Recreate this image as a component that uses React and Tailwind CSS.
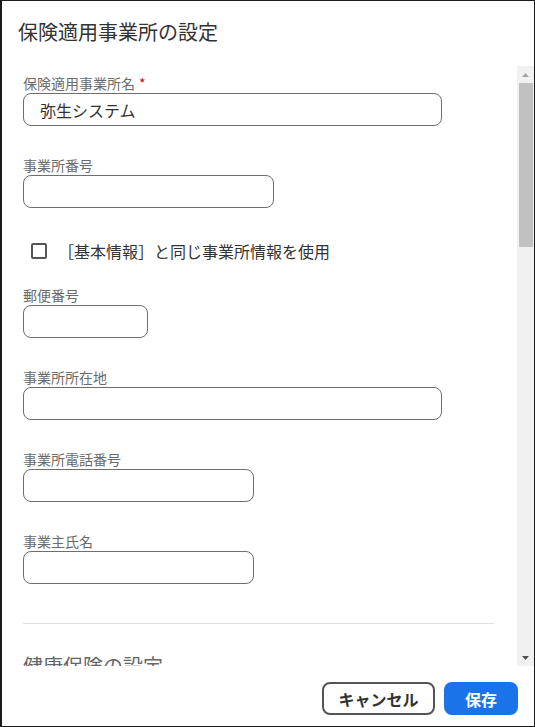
const font = { fontFamily: '"Noto Sans CJK JP", "Noto Sans", sans-serif' };

const Field = ({ label, required, width, value }) => (
    <div className="flex flex-col">
        <label className="text-[14px] leading-[19px] text-[#6b6b6b]">
            {label}
            {required && <span className="ml-[4px] text-[#d0021b]">*</span>}
        </label>
        <div
            className={`${width} h-[33px] border border-[#6e6e6e] rounded-[8px] px-[16px] flex items-center text-[16px] text-[#333]`}
        >
            {value}
        </div>
    </div>
);

const Scrollbar = () => (
    <div className="w-[17px] h-full bg-[#f1f1f1] flex flex-col items-stretch">
        <div className="h-[17px] flex items-center justify-center">
            <svg width="7" height="4" viewBox="0 0 7 4">
                <polygon points="0,4 7,4 3.5,0" fill="#a3a3a3" />
            </svg>
        </div>
        <div className="ml-[2px] mr-[1px] h-[164px] bg-[#c1c1c1]" />
        <div className="flex-1" />
        <div className="h-[17px] flex items-center justify-center">
            <svg width="7" height="4" viewBox="0 0 7 4">
                <polygon points="0,0 7,0 3.5,4" fill="#505050" />
            </svg>
        </div>
    </div>
);

export default function App() {
    return (
        <div style={font} className="w-[535px] h-[727px] bg-white border border-l-2 border-[#1a1a1a] flex flex-col overflow-hidden">
            <div className="h-[65px] pl-[16px] pt-[17px]">
                <h1 className="text-[20px] leading-[28px] text-[#333]">保険適用事業所の設定</h1>
            </div>

            <div className="h-[600px] flex">
                <div className="flex-1 overflow-hidden pl-[21px] pr-[23px] pt-[8px]">
                    <div className="flex flex-col gap-[30px]">
                        <Field label="保険適用事業所名" required width="w-[419px]" value="弥生システム" />
                        <Field label="事業所番号" width="w-[251px]" />
                        <div className="h-[24px] flex items-center mt-[1px] -mb-[7px] pl-[8px]">
                            <div className="w-[16px] h-[16px] border-2 border-[#555] rounded-[2px]" />
                            <span className="ml-[11px] text-[16px] text-[#333]">［基本情報］と同じ事業所情報を使用</span>
                        </div>
                        <Field label="郵便番号" width="w-[125px]" />
                        <Field label="事業所所在地" width="w-[419px]" />
                        <Field label="事業所電話番号" width="w-[231px]" />
                        <Field label="事業主氏名" width="w-[231px]" />
                    </div>
                    <div className="mt-[39px] border-t border-[#e0e0e0]" />
                    <h2 className="mt-[28px] text-[20px] leading-[28px] text-[#666]">健康保険の設定</h2>
                    <div className="mt-[20px] flex flex-col gap-[30px]">
                        <Field label="健康保険の種類" width="w-[251px]" />
                    </div>
                </div>
                <Scrollbar />
            </div>

            <div className="flex-1 flex justify-end items-start gap-[9px] pr-[16px] pt-[16px]">
                <button className="w-[113px] h-[33px] border-2 border-[#555] rounded-[8px] text-[16px] font-bold text-[#333]">
                    キャンセル
                </button>
                <button className="w-[74px] h-[33px] bg-[#1a73e8] rounded-[8px] text-[16px] font-bold text-white">
                    保存
                </button>
            </div>
        </div>
    );
}
